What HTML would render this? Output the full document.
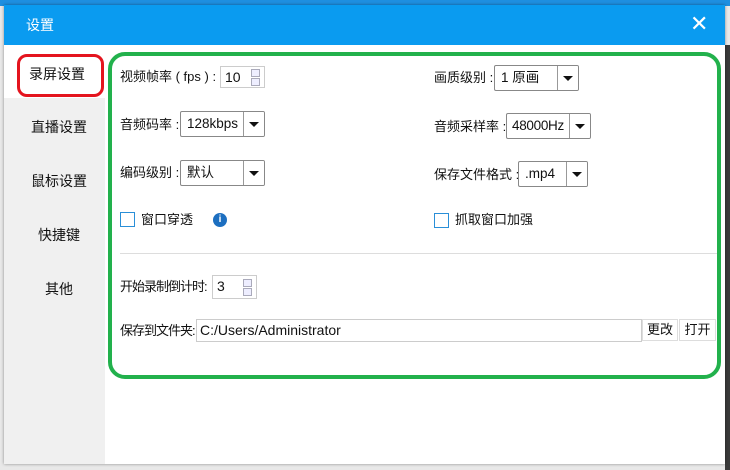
<!DOCTYPE html>
<html><head><meta charset="utf-8"><style>
*{margin:0;padding:0;box-sizing:border-box}
body{width:730px;height:470px;overflow:hidden;background:#e8e8e8;position:relative;font-family:"Liberation Sans","Noto Sans CJK SC",sans-serif;font-size:13px;line-height:16px;color:#111}
.a{position:absolute}
.dlg{left:4px;top:5px;width:721px;height:459px;background:#fff;box-shadow:0 0 3px rgba(0,0,0,.4)}
.title{left:4px;top:5px;width:721px;height:40px;background:#0a9bf0;color:#fff;font-size:14px;line-height:40px;padding-left:22px}
.side{left:4px;top:98px;width:101px;height:366px;background:#f0f0f0}
.nav{width:101px;left:4px;text-align:center;font-size:14px;line-height:18px}
.sel{left:4px;top:45px;width:101px;height:53px;background:#fff}
.box{border:1px solid #888;border-radius:2px;background:#fff;height:26px;line-height:24px;padding-left:6px;font-size:13.5px;white-space:nowrap;overflow:hidden}
.dd{border-left:1px solid #999;position:absolute;right:0;top:0;width:21px;height:24px;background:#fff}
.dd:after{content:"";position:absolute;left:5px;top:10px;border-left:5px solid transparent;border-right:5px solid transparent;border-top:5px solid #111}
.cb{width:15px;height:15px;border:1px solid #2a8fd8;background:#fff}
.spin{border:1px solid #ccc;background:#fff;height:22px;line-height:20px;padding-left:4px;font-size:14px}
.sb{position:absolute;right:4px;width:9px;height:8px;border:1px solid #aab;background:#eef}
.btn{border:1px solid #ddd;background:#fff;height:22px;line-height:20px;text-align:center}
</style></head><body>
<div class="a" style="left:0;top:0;width:730px;height:6px;background:#1e8fe0"></div>
<div class="a" style="left:725px;top:45px;width:5px;height:425px;background:#3a3a3a"></div>
<div class="a dlg"></div>
<div class="a title">设置</div>
<div class="a" style="left:690px;top:13px;color:#fff;font-size:22px;line-height:22px">✕</div>
<div class="a side"></div>
<div class="a sel"></div>
<div class="a" style="left:17px;top:54px;width:87px;height:43px;border:3px solid #e4141e;border-radius:10px"></div>
<div class="a nav" style="left:4px;top:65px;width:106px">录屏设置</div>
<div class="a nav" style="top:118px;width:110px">直播设置</div>
<div class="a nav" style="top:172px;width:110px">鼠标设置</div>
<div class="a nav" style="top:226px;width:110px">快捷键</div>
<div class="a nav" style="top:280px;width:110px">其他</div>
<div class="a" style="left:108px;top:52px;width:613px;height:327px;border:4px solid #22b14c;border-radius:17px"></div>

<div class="a" style="left:120px;top:69px">视频帧率 ( fps ) :</div>
<div class="a spin" style="left:220px;top:66px;width:45px">10<div class="sb" style="top:2px"></div><div class="sb" style="top:11px"></div></div>
<div class="a" style="left:434px;top:70px">画质级别 :</div>
<div class="a box" style="left:494px;top:65px;width:85px">1 原画<div class="dd"></div></div>

<div class="a" style="left:120px;top:117px">音频码率 :</div>
<div class="a box" style="left:180px;top:111px;width:85px">128kbps<div class="dd"></div></div>
<div class="a" style="left:434px;top:119px">音频采样率 :</div>
<div class="a box" style="left:506px;top:113px;width:85px;padding-left:5px;letter-spacing:-0.3px">48000Hz<div class="dd"></div></div>

<div class="a" style="left:120px;top:165px">编码级别 :</div>
<div class="a box" style="left:180px;top:160px;width:85px">默认<div class="dd"></div></div>
<div class="a" style="left:434px;top:167px">保存文件格式 :</div>
<div class="a box" style="left:518px;top:161px;width:70px">.mp4<div class="dd"></div></div>

<div class="a cb" style="left:120px;top:212px"></div>
<div class="a" style="left:141px;top:212px">窗口穿透</div>
<div class="a" style="left:213px;top:213px;width:14px;height:14px;border-radius:50%;background:#1d6fc0;color:#fff;font-size:10px;line-height:14px;text-align:center;font-weight:bold">i</div>
<div class="a cb" style="left:434px;top:213px"></div>
<div class="a" style="left:455px;top:212px">抓取窗口加强</div>

<div class="a" style="left:120px;top:253px;width:597px;height:1px;background:#ddd"></div>

<div class="a" style="left:120px;top:279px;letter-spacing:-1px">开始录制倒计时:</div>
<div class="a spin" style="left:212px;top:275px;width:45px;height:24px">3<div class="sb" style="top:3px"></div><div class="sb" style="top:12px"></div></div>

<div class="a" style="left:120px;top:323px;letter-spacing:-1px">保存到文件夹:</div>
<div class="a" style="left:196px;top:319px;width:446px;height:23px;border:1px solid #ccc;line-height:21px;padding-left:3px;font-size:14px">C:/Users/Administrator</div>
<div class="a btn" style="left:642px;top:319px;width:36px">更改</div>
<div class="a btn" style="left:679px;top:319px;width:37px">打开</div>
</body></html>
